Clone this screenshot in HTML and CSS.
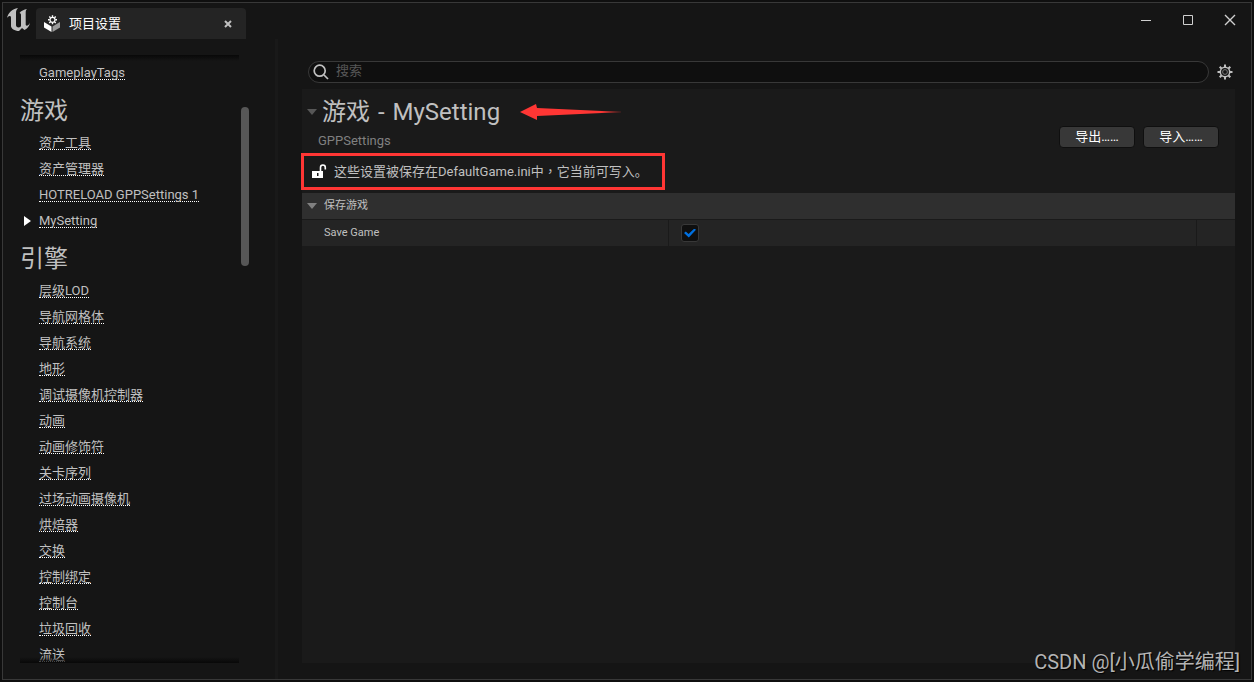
FILE: index.html
```html
<!DOCTYPE html>
<html lang="zh-CN">
<head>
<meta charset="utf-8">
<title>项目设置</title>
<link rel="stylesheet" href="styles.css">
</head>
<body>
<div class="window">
  <header class="titlebar">
    <svg class="logo" viewBox="0 0 24 26" aria-hidden="true"><path fill="#c0c0c0" d="M0 10C1 5 5 1 11 0C9.500 1.500 9 3 9 5V17C9 18.500 10 19.500 11.500 19.500C13 19.500 14 18.500 14 17.500V7C14 6 13.500 5 12.500 5C14 3 17 1.500 20 1C19 2 18.700 3 18.700 4.500V16.500C18.700 17.500 19.500 18 20.500 17.500C21.500 17 22.500 16 23 14.500C22.500 18 20.500 20.500 17.500 22L15 20L12 23C7.500 23 4 20.500 4 18V10C4 8.500 3.500 8 2.500 8C1.500 8 .7 9 0 10Z"/></svg>
    <div class="tab">
      <svg class="tab-icon" viewBox="0 0 16 17" aria-hidden="true"><path fill="#fff" d="M0 7L7.500 11.500V17L0 12.500Z"/><path fill="#9a9a9a" d="M16 7L8.500 11.500V17L16 12.500Z"/><circle cx="8.500" cy="4.800" r="2.500" fill="none" stroke="#fff" stroke-width="1.200"/><path stroke="#fff" stroke-width="1.400" d="M8.500 .3V2M8.500 7.600V9.300M4 4.800H5.700M11.300 4.800H13M5.300 1.600L6.500 2.800M10.500 6.800L11.700 8M11.700 1.600L10.500 2.800M6.500 6.800L5.300 8"/></svg>
      <span class="tab-title">项目设置</span>
      <button class="tab-close" aria-label="关闭标签"><svg viewBox="0 0 8 8"><path d="M1 1L7 7M7 1L1 7"/></svg></button>
    </div>
    <div class="window-buttons">
      <button aria-label="最小化"><svg viewBox="0 0 12 12"><path d="M1 6.500H11"/></svg></button>
      <button aria-label="最大化"><svg viewBox="0 0 12 12"><path d="M1.500 1.500H10.500V10.500H1.500Z"/></svg></button>
      <button aria-label="关闭"><svg viewBox="0 0 12 12"><path class="thick" d="M1 1L11 11M11 1L1 11"/></svg></button>
    </div>
  </header>
  <div class="body">
    <nav class="sidebar">
      <div class="scroll">
        <ul><li><a href="#">GameplayTags</a></li></ul>
        <h2>游戏</h2>
        <ul>
          <li><a href="#">资产工具</a></li>
          <li><a href="#">资产管理器</a></li>
          <li><a href="#">HOTRELOAD GPPSettings 1</a></li>
          <li class="current"><a href="#">MySetting</a></li>
        </ul>
        <h2>引擎</h2>
        <ul>
          <li><a href="#">层级LOD</a></li>
          <li><a href="#">导航网格体</a></li>
          <li><a href="#">导航系统</a></li>
          <li><a href="#">地形</a></li>
          <li><a href="#">调试摄像机控制器</a></li>
          <li><a href="#">动画</a></li>
          <li><a href="#">动画修饰符</a></li>
          <li><a href="#">关卡序列</a></li>
          <li><a href="#">过场动画摄像机</a></li>
          <li><a href="#">烘焙器</a></li>
          <li><a href="#">交换</a></li>
          <li><a href="#">控制绑定</a></li>
          <li><a href="#">控制台</a></li>
          <li><a href="#">垃圾回收</a></li>
          <li><a href="#">流送</a></li>
        </ul>
      </div>
      <div class="track"><div class="thumb"></div></div>
    </nav>
    <main class="main">
      <div class="search-row">
        <label class="search">
          <svg viewBox="0 0 16 16" aria-hidden="true"><circle cx="6.700" cy="6.700" r="5.500"/><path d="M11 11L15 15"/></svg>
          <input type="text" placeholder="搜索" aria-label="搜索">
        </label>
        <button class="gear" aria-label="设置"><svg viewBox="0 0 16 16"><circle cx="8" cy="8" r="4.700" fill="none" stroke="#c0c0c0" stroke-width="1.500"/><circle cx="8" cy="8" r="2.400" fill="none" stroke="#777"/><path stroke="#c0c0c0" stroke-width="2" d="M8 .5V3M8 13V15.500M.5 8H3M13 8H15.500M2.700 2.700L4.500 4.500M11.500 11.500L13.300 13.300M2.700 13.300L4.500 11.500M11.500 4.500L13.300 2.700"/></svg></button>
      </div>
      <section class="panel">
        <div class="heading">
          <div class="heading-text">
            <div class="title-row">
              <span class="triangle dim"></span>
              <h1>游戏<span class="dash"> - </span>MySetting</h1>
              <svg class="arrow" viewBox="0 0 102 18" aria-hidden="true"><defs><linearGradient id="fade"><stop offset=".8" stop-color="#ff3634"/><stop offset="1" stop-color="#ff3634" stop-opacity=".2"/></linearGradient></defs><path fill="url(#fade)" d="M0 9L16 1L17 5L82 8L101 8.500V9.500L82 10L17 13V17Z"/></svg>
            </div>
            <p class="subtitle">GPPSettings</p>
          </div>
          <div class="actions"><button>导出……</button><button>导入……</button></div>
        </div>
        <div class="notice">
          <svg viewBox="0 0 15 15" aria-hidden="true"><path fill="#fff" fill-rule="evenodd" d="M0 7H11V14H0ZM5 9V12H6.500V9Z"/><path fill="none" stroke="#fff" stroke-width="1.600" d="M8.500 7V3.500C8.500 .2 13.300 .2 13.300 3.500V5.500"/></svg>
          <span>这些设置被保存在DefaultGame.ini中<span class="comma" lang="zh-TW">，</span>它当前可写入。</span>
        </div>
        <h3 class="category"><span class="triangle"></span>保存游戏</h3>
        <div class="property">
          <label class="cell name" for="save">Save Game</label>
          <div class="cell"><input type="checkbox" id="save" checked></div>
          <div class="cell"></div>
        </div>
      </section>
    </main>
  </div>
</div>
<div class="watermark">CSDN @[小瓜偷学编程]</div>
</body>
</html>
```
FILE: styles.css
```css
* { box-sizing: border-box; }
body {
  margin: 0;
  height: 100vh;
  padding: 2px;
  background: #0f0f0f;
  color: #c0c0c0;
  font: 13px/14px Roboto, "Noto Sans CJK SC", sans-serif;
  overflow: hidden;
}
button { border: 0; padding: 0; background: none; color: inherit; font: inherit; }
svg { display: block; }
ul, h1, h2, h3, p { margin: 0; padding: 0; list-style: none; font-weight: 400; }
.window {
  height: 100%;
  display: flex;
  flex-direction: column;
  border: 1px solid #383838;
  background: #151515;
}
.titlebar { display: flex; height: 36px; flex: none; padding-left: 4px; }
.logo { width: 24px; height: 26px; margin-top: 5px; }
.tab {
  display: flex;
  align-items: center;
  width: 210px;
  height: 31px;
  margin: 5px 0 0 5px;
  padding: 0 14px 0 8px;
  border-radius: 4px 4px 0 0;
  background: #242424;
  color: #fff;
}
.tab-icon { width: 16px; height: 17px; }
.tab-title { flex: 1; padding-left: 9px; }
.tab-close svg { width: 8px; height: 8px; fill: none; stroke: #c0c0c0; stroke-width: 2; }
.window-buttons { display: flex; gap: 30px; margin-left: auto; padding: 11px 15px 0 0; align-items: flex-start; }
.window-buttons svg { width: 12px; height: 12px; fill: none; stroke: #d0d0d0; stroke-width: 1; }
.window-buttons .thick { stroke-width: 1.4; }
.body { flex: 1; display: flex; min-height: 0; }
.sidebar {
  display: flex;
  width: 275px;
  flex: none;
  padding: 16px 25px 16px 17px;
  border-right: 3px solid #191919;
}
.scroll { position: relative; flex: 1; overflow: hidden; padding-top: 5px; }
.scroll::before, .scroll::after {
  content: "";
  position: absolute;
  left: 0;
  right: 0;
  top: 0;
  height: 6px;
  background: linear-gradient(#080808, transparent);
}
.scroll::after { top: auto; bottom: 0; background: linear-gradient(transparent, #080808); }
.scroll li { position: relative; height: 26px; padding: 6px 0 0 19px; white-space: nowrap; }
.scroll a {
  display: inline-block;
  height: 14px;
  border-bottom: 1px dotted #fff;
  color: #c0c0c0;
  text-decoration: none;
}
.current::before {
  content: "";
  position: absolute;
  left: 4px;
  top: 8px;
  border: 5px solid transparent;
  border-left: 7px solid #fff;
  border-right: 0;
}
.scroll h2 { height: 44px; font-size: 24px; line-height: 50px; }
.track { width: 11px; padding: 52px 1px 0 2px; }
.thumb { width: 8px; height: 159px; border-radius: 4px; background: #575757; }
.main { flex: 1; min-width: 0; display: flex; flex-direction: column; padding: 22px 16px 16px 24px; }
.search-row { display: flex; align-items: center; gap: 8px; padding: 0 2px 6px 6px; }
.search {
  flex: 1;
  display: flex;
  align-items: center;
  gap: 7px;
  height: 22px;
  padding: 0 4px;
  border: 1px solid #383838;
  border-radius: 11px;
  background: #0f0f0f;
}
.search svg { width: 16px; height: 16px; fill: none; stroke: #c0c0c0; stroke-width: 1.7; }
.search input { flex: 1; border: 0; padding: 0 0 2px; outline: 0; background: none; color: #c0c0c0; font: inherit; }
.search input::placeholder { color: #575757; }
.gear svg { width: 16px; height: 16px; }
.panel { flex: 1; background: #1a1a1a; }
.heading { display: flex; justify-content: space-between; height: 64px; padding: 0 16px 0 5px; }
.title-row { display: flex; align-items: center; height: 45px; }
h1 { font-size: 24px; line-height: 44px; white-space: nowrap; }
.dash { margin: 0 2px; }
.triangle { border: 5px solid transparent; border-top: 6px solid #808080; border-bottom: 0; margin-right: 5px; }
.triangle.dim { border-top-color: #575757; }
.arrow { width: 102px; height: 18px; margin-left: 20px; }
.subtitle { padding-left: 11px; color: #808080; }
.actions { display: flex; gap: 8px; align-items: flex-start; padding-top: 37px; }
.actions button {
  width: 76px;
  height: 22px;
  border: 1px solid #0f0f0f;
  border-radius: 4px;
  background: #383838;
  color: #fff;
}
.notice {
  display: flex;
  align-items: center;
  width: 364px;
  height: 37px;
  margin: 0 0 3px -1px;
  padding-left: 8px;
  border: 3px solid #ff3634;
  white-space: nowrap;
}
.notice svg { width: 15px; height: 15px; margin-right: 7px; }
.comma { font-family: "Noto Sans CJK TC", sans-serif; }
.category {
  display: flex;
  align-items: center;
  height: 26px;
  padding-left: 5px;
  background: #2f2f2f;
  font-size: 11px;
}
.category .triangle { margin-right: 7px; }
.property { display: grid; grid-template-columns: 366fr 527fr 38fr; gap: 1px; height: 27px; padding-top: 1px; }
.cell { display: flex; align-items: center; padding-left: 12px; background: #242424; }
.cell.name { padding-left: 22px; font-size: 11px; }
.cell input {
  appearance: none;
  width: 18px;
  height: 18px;
  margin: 0;
  border: 1px solid #383838;
  border-radius: 3px;
  background: #0f0f0f;
  display: grid;
  place-items: center;
}
.cell input:checked::before {
  content: "";
  width: 12px;
  height: 9px;
  background: #0070e0;
  clip-path: polygon(0 50%, 15% 32%, 38% 60%, 86% 0, 100% 15%, 40% 100%);
}
.watermark {
  position: absolute;
  right: 14px;
  bottom: 8px;
  color: #b4b4b4;
  font-size: 20px;
  line-height: 24px;
  text-shadow: 1px 1px 1px #000;
}
```
